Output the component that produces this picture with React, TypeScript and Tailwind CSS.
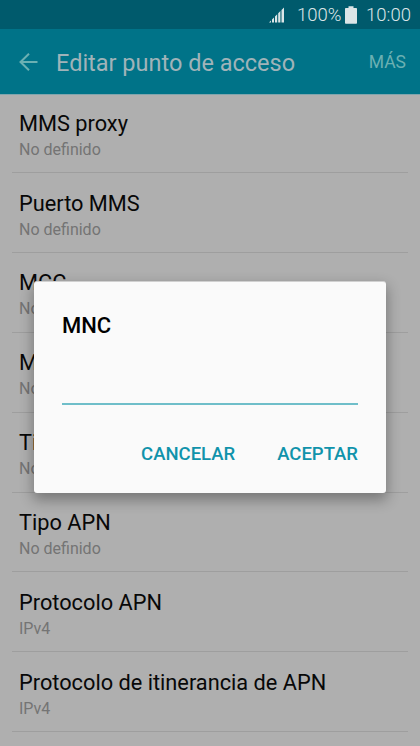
type Setting = {
  title: string;
  value: string;
};

const settings: Setting[] = [
  { title: 'MMS proxy', value: 'No definido' },
  { title: 'Puerto MMS', value: 'No definido' },
  { title: 'MCC', value: 'No definido' },
  { title: 'MNC', value: 'No definido' },
  { title: 'Tipo de autenticación', value: 'No definido' },
  { title: 'Tipo APN', value: 'No definido' },
  { title: 'Protocolo APN', value: 'IPv4' },
  { title: 'Protocolo de itinerancia de APN', value: 'IPv4' },
];

function StatusBar() {
  return (
    <div className="flex h-[29px] shrink-0 items-center justify-end bg-[#005a6c] pr-[9px] text-[18.5px] font-light text-[#dce5e7]">
      <svg width="16" height="16" viewBox="0 0 16 16" fill="currentColor" className="mr-[12px]">
        <path d="M0 15.5 2 13.5V15.5ZM3 12.5 5 10.5V15.5H3ZM6 9.5 8.2 7.3V15.5H6ZM9.2 6.3 11.4 4.1V15.5H9.2ZM12.5 3 15 0.5V15.5H12.5Z" />
      </svg>
      <span className="w-[44px] whitespace-nowrap leading-[30px]">100%</span>
      <svg width="12" height="18" viewBox="0 0 12 18" fill="currentColor" className="mr-[9px] ml-[4px]">
        <path d="M3.5 0.2H8.5V2H11.2Q12 2 12 2.8V17Q12 17.8 11.2 17.8H0.8Q0 17.8 0 17V2.8Q0 2 0.8 2H3.5Z" />
      </svg>
      <span className="leading-[30px]">10:00</span>
    </div>
  );
}

function AppBar() {
  return (
    <header className="flex h-[66px] shrink-0 items-center border-b border-[#80a5ad] bg-[#007388] pr-[14px] pl-[19px]">
      <button aria-label="Atrás" className="mr-[18px] text-[#6bb0b2]">
        <svg width="19" height="18" viewBox="0 0 19 18" fill="none" stroke="currentColor" strokeWidth="2">
          <path d="M18.5 9H1.5M10 0.7 1.5 9 10 17.3" />
        </svg>
      </button>
      <h1 className="flex-1 pt-[3px] text-[23.5px] leading-8 whitespace-nowrap text-[#a0b3b9]">Editar punto de acceso</h1>
      <button className="pt-[2px] text-[17.5px] text-[#6bb0b2]">MÁS</button>
    </header>
  );
}

function SettingRow({ title, value }: Setting) {
  return (
    <li className="mx-3 flex h-[79.85px] shrink-0 flex-col border-b border-[#9e9e9e] px-[7px] pt-[17.4px]">
      <span className="text-[21.75px] leading-[26px] whitespace-nowrap text-[#080808]">{title}</span>
      <span className="pt-[3px] text-[16px] leading-5 text-[#747474]">{value}</span>
    </li>
  );
}

function EditDialog() {
  return (
    <div className="absolute inset-0 flex items-start justify-center pt-[281px]">
      <div
        role="dialog"
        className="flex h-[212px] w-[352px] flex-col rounded-[3px] border-t border-[#d0d0d0] bg-[#fafafa] px-7 shadow-[0_6px_14px_1px_rgba(0,0,0,0.32)]"
      >
        <h2 className="mt-[30px] text-[22px] leading-[28px] font-medium text-black">MNC</h2>
        <input
          aria-label="MNC"
          className="mt-[17px] h-[48px] w-full shrink-0 border-b-2 border-[#6fbec9] bg-transparent text-[22px] outline-none"
        />
        <div className="mt-[36px] flex justify-end gap-[42px] text-[18.5px] leading-[26px] font-medium text-[#1093ab]">
          <button>CANCELAR</button>
          <button>ACEPTAR</button>
        </div>
      </div>
    </div>
  );
}

export default function App() {
  return (
    <div className="relative flex h-[746px] w-[420px] flex-col overflow-hidden bg-[#afafaf] font-['Roboto',sans-serif]">
      <StatusBar />
      <AppBar />
      <ul className="-mt-[1.65px] flex flex-col">
        {settings.map((item) => (
          <SettingRow key={item.title} {...item} />
        ))}
      </ul>
      <EditDialog />
    </div>
  );
}
